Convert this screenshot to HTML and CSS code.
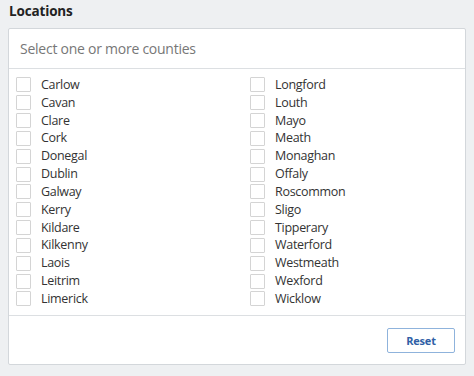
FILE: index.html
```html
<!DOCTYPE html>
<html lang="en">
<head>
<meta charset="utf-8">
<title>Locations</title>
<link rel="stylesheet" href="styles.css">
</head>
<body>
<div class="page">
  <h2 class="title">Locations</h2>
  <div class="panel">
    <div class="panel-head">Select one or more counties</div>
    <div class="panel-list">
      <ul class="col">
        <li><span class="box"></span>Carlow</li>
        <li><span class="box"></span>Cavan</li>
        <li><span class="box"></span>Clare</li>
        <li><span class="box"></span>Cork</li>
        <li><span class="box"></span>Donegal</li>
        <li><span class="box"></span>Dublin</li>
        <li><span class="box"></span>Galway</li>
        <li><span class="box"></span>Kerry</li>
        <li><span class="box"></span>Kildare</li>
        <li><span class="box"></span>Kilkenny</li>
        <li><span class="box"></span>Laois</li>
        <li><span class="box"></span>Leitrim</li>
        <li><span class="box"></span>Limerick</li>
      </ul>
      <ul class="col">
        <li><span class="box"></span>Longford</li>
        <li><span class="box"></span>Louth</li>
        <li><span class="box"></span>Mayo</li>
        <li><span class="box"></span>Meath</li>
        <li><span class="box"></span>Monaghan</li>
        <li><span class="box"></span>Offaly</li>
        <li><span class="box"></span>Roscommon</li>
        <li><span class="box"></span>Sligo</li>
        <li><span class="box"></span>Tipperary</li>
        <li><span class="box"></span>Waterford</li>
        <li><span class="box"></span>Westmeath</li>
        <li><span class="box"></span>Wexford</li>
        <li><span class="box"></span>Wicklow</li>
      </ul>
    </div>
    <div class="panel-foot">
      <button class="btn" type="button">Reset</button>
    </div>
  </div>
</div>
</body>
</html>
```

FILE: styles.css
```css
html, body {
  margin: 0;
  padding: 0;
}
body {
  background: #eef0f2;
  font-family: "Open Sans", "DejaVu Sans", sans-serif;
  color: #333;
}
.page {
  padding: 0 8px 10px 8px;
}
.title {
  margin: 0 0 5px 1px;
  font-size: 13.5px;
  font-weight: 700;
  letter-spacing: -0.15px;
  line-height: 23px;
  color: #222;
}
.panel {
  background: #fff;
  border: 1px solid #d3d7db;
  border-radius: 2px;
}
.panel-head {
  height: 39px;
  line-height: 39px;
  padding-left: 11px;
  font-size: 14px;
  letter-spacing: -0.25px;
  color: #777;
  border-bottom: 1px solid #dcdfe2;
}
.panel-list {
  display: grid;
  grid-template-columns: 234px 1fr;
  padding: 7px 0 7px 7px;
  border-bottom: 1px solid #dcdfe2;
}
.col {
  list-style: none;
  margin: 0;
  padding: 0;
}
.col li {
  display: flex;
  align-items: center;
  height: 17.83px;
  font-size: 12.5px;
  letter-spacing: -0.3px;
  line-height: 17.83px;
  color: #333;
}
.box {
  width: 13px;
  height: 13px;
  border: 1px solid #d4d4d4;
  border-radius: 1px;
  background: #fff;
  margin-right: 10px;
  flex: none;
}
.panel-foot {
  display: flex;
  justify-content: flex-end;
  padding: 12px 10px 11px;
}
.btn {
  width: 68px;
  height: 25px;
  padding: 0;
  background: #fff;
  border: 1px solid #8fb3dc;
  border-radius: 2px;
  font-family: "Open Sans", "DejaVu Sans", sans-serif;
  font-size: 11px;
  letter-spacing: -0.2px;
  font-weight: 700;
  color: #2f5fa6;
}
```
